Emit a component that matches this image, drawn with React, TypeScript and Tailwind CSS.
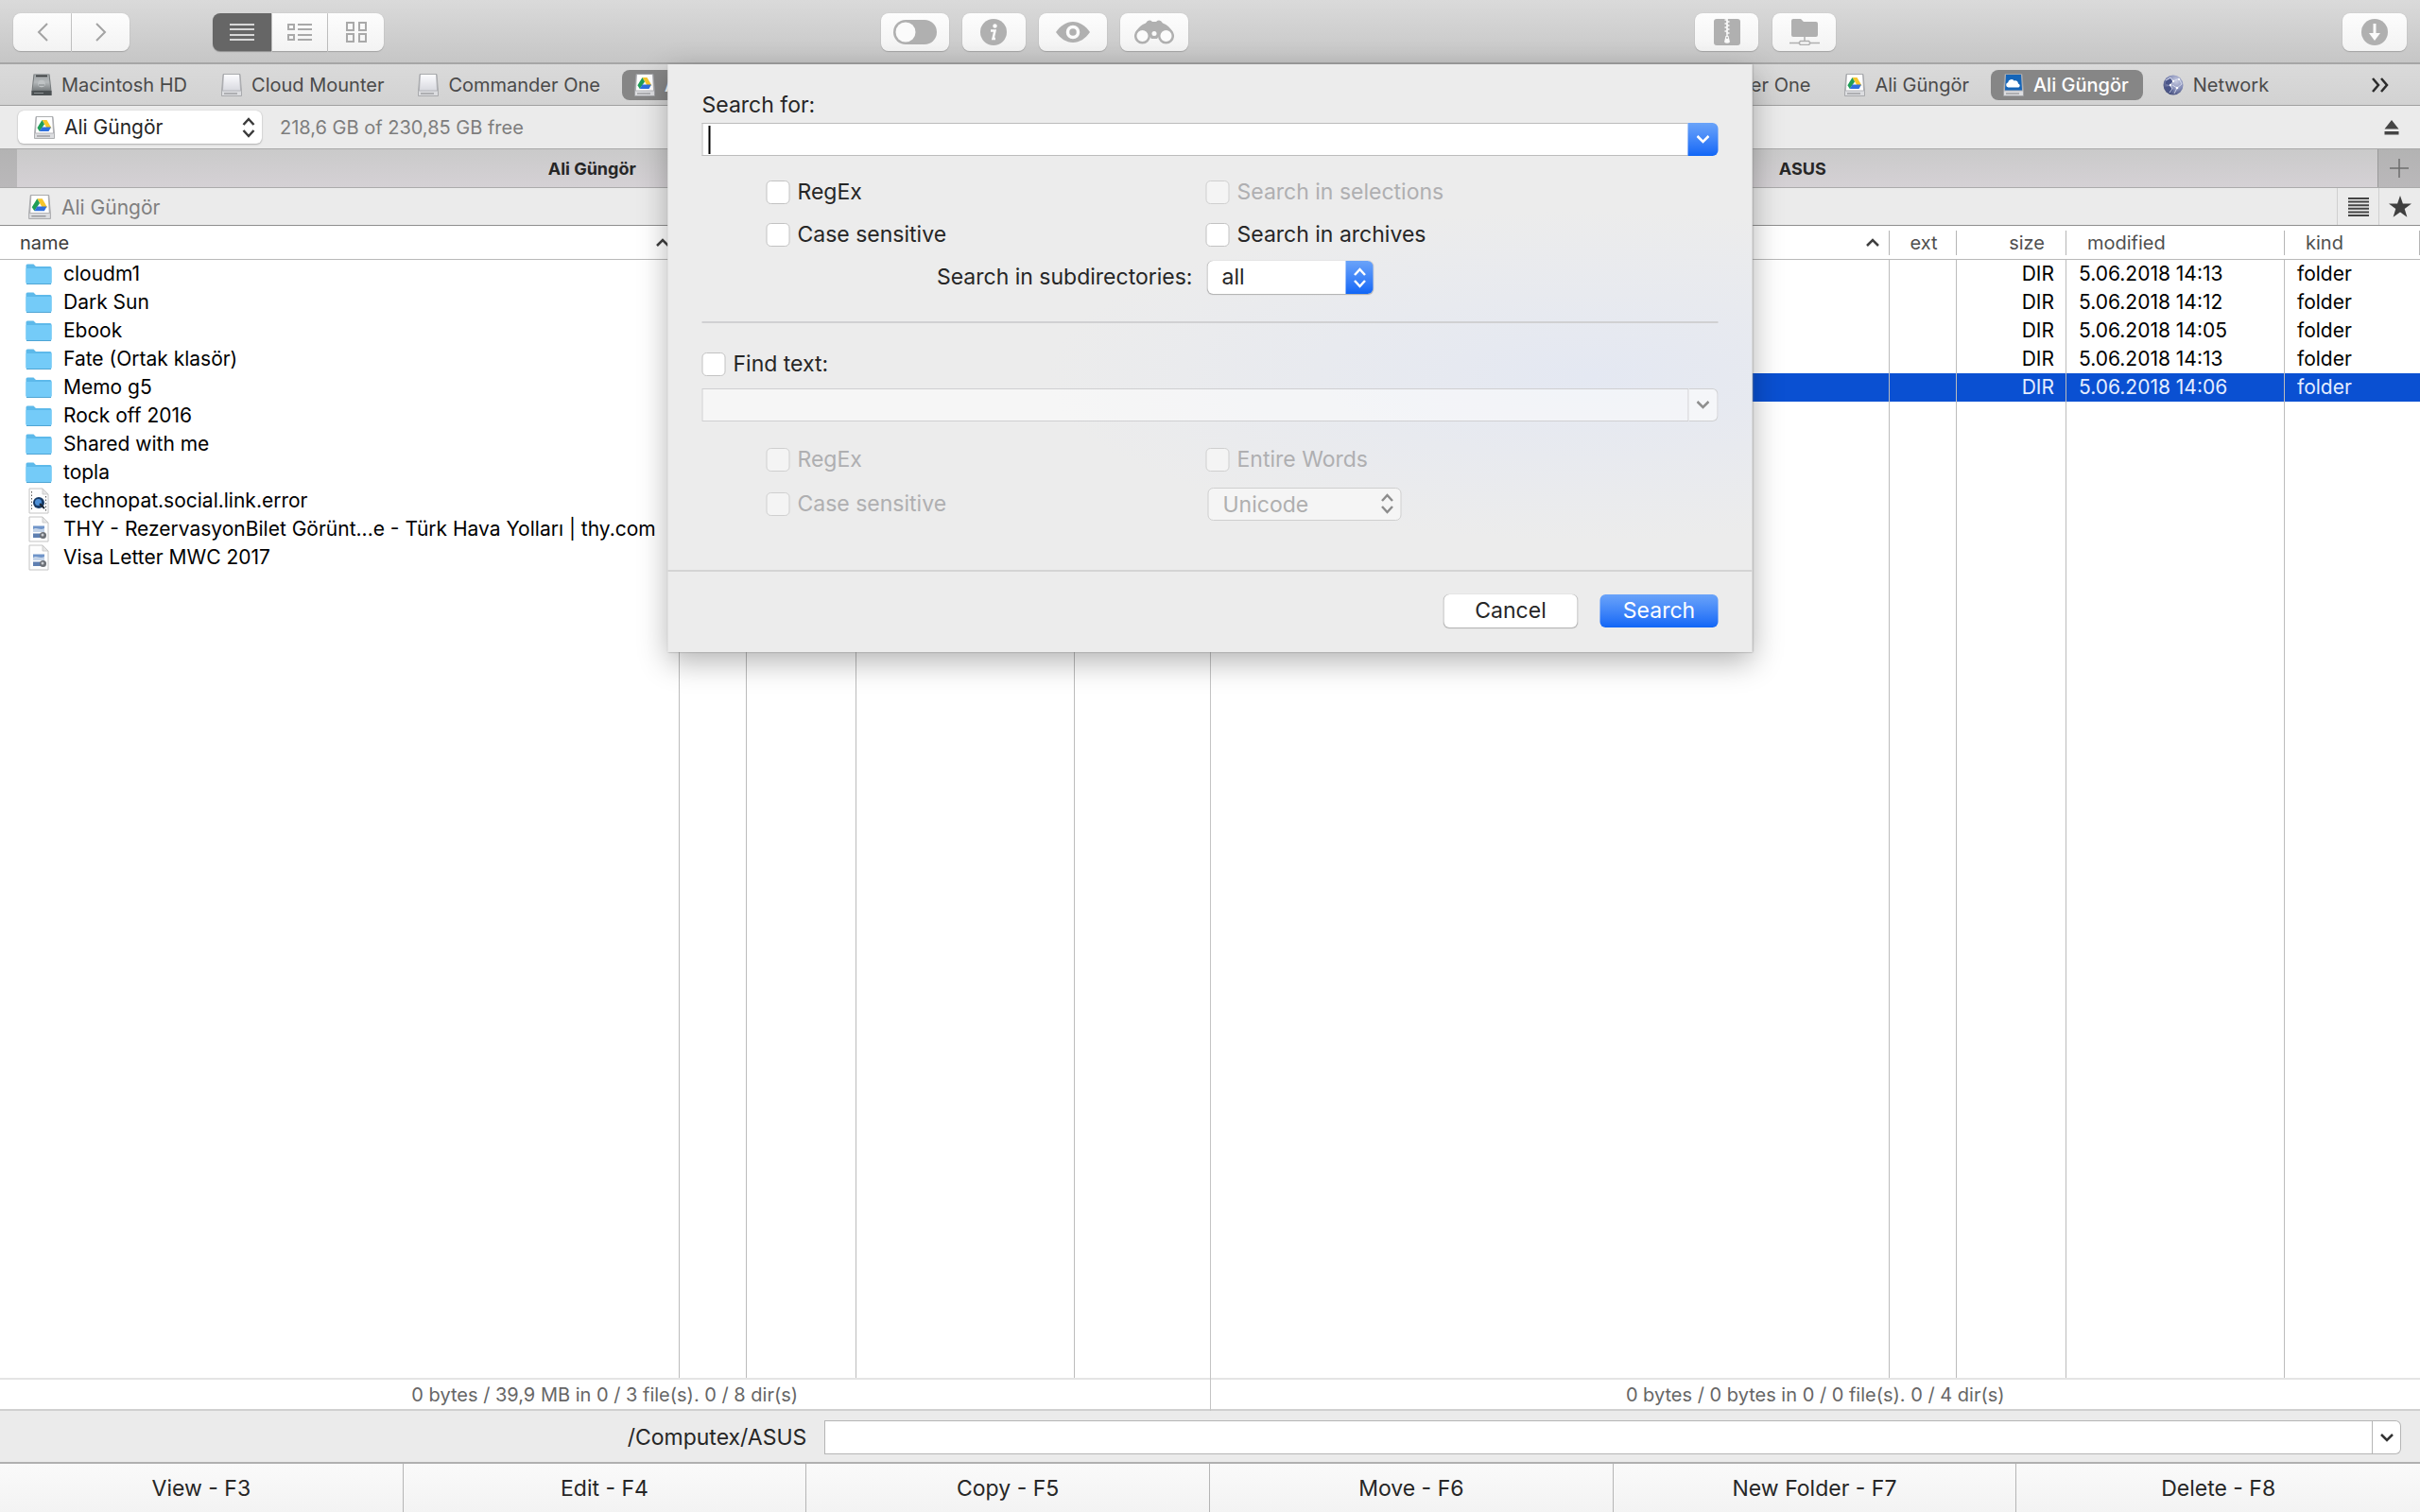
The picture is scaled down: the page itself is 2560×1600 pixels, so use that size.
import type { ReactNode } from 'react';

type DriveKind = 'hd' | 'plain' | 'gdrive' | 'onedrive' | 'network';
type FileKind = 'folder' | 'web' | 'image';

type FileEntry = { name: string; icon: FileKind; size?: string; modified?: string; kind?: string };

type Favorite = { label: string; icon: DriveKind };

const localFavorites: Favorite[] = [
    { label: 'Macintosh HD', icon: 'hd' },
    { label: 'Cloud Mounter', icon: 'plain' },
    { label: 'Commander One', icon: 'plain' },
    { label: 'Ali Güngör', icon: 'gdrive' },
];

const allFavorites: Favorite[] = [
    ...localFavorites,
    { label: 'Ali Güngör', icon: 'onedrive' },
    { label: 'Network', icon: 'network' },
];

const leftFiles: FileEntry[] = [
    { name: 'cloudm1', icon: 'folder' },
    { name: 'Dark Sun', icon: 'folder' },
    { name: 'Ebook', icon: 'folder' },
    { name: 'Fate (Ortak klasör)', icon: 'folder' },
    { name: 'Memo g5', icon: 'folder' },
    { name: 'Rock off 2016', icon: 'folder' },
    { name: 'Shared with me', icon: 'folder' },
    { name: 'topla', icon: 'folder' },
    { name: 'technopat.social.link.error', icon: 'web' },
    { name: 'THY - RezervasyonBilet Görünt...e - Türk Hava Yolları | thy.com', icon: 'image' },
    { name: 'Visa Letter MWC 2017', icon: 'image' },
];

const rightFiles: FileEntry[] = [
    { name: '', icon: 'folder', size: 'DIR', modified: '5.06.2018 14:13', kind: 'folder' },
    { name: '', icon: 'folder', size: 'DIR', modified: '5.06.2018 14:12', kind: 'folder' },
    { name: '', icon: 'folder', size: 'DIR', modified: '5.06.2018 14:05', kind: 'folder' },
    { name: '', icon: 'folder', size: 'DIR', modified: '5.06.2018 14:13', kind: 'folder' },
    { name: '', icon: 'folder', size: 'DIR', modified: '5.06.2018 14:06', kind: 'folder' },
];

const commands = ['View - F3', 'Edit - F4', 'Copy - F5', 'Move - F6', 'New Folder - F7', 'Delete - F8'];

function DriveIcon({ kind, className = 'h-6 w-6' }: { kind: DriveKind; className?: string }) {
    if (kind === 'network') {
        return (
            <svg viewBox="0 0 24 24" className={className} aria-hidden="true">
                <defs>
                    <radialGradient id="globe" cx="0.65" cy="0.3" r="0.8">
                        <stop offset="0" stopColor="#c9cde2" />
                        <stop offset="0.55" stopColor="#8089b4" />
                        <stop offset="1" stopColor="#39426f" />
                    </radialGradient>
                </defs>
                <circle cx="12" cy="12" r="10.5" fill="url(#globe)" />
                <path d="M4 8l5-3 3 4-4 3-4-1zM3 14l5-1 4 4-3 4-4-3z" fill="#4a5588" />
                <path d="M4 7l5-3 3 4-3 4 2 4-3 4M12 8l6-3 3 6-5 4-5-3M16 15l-3 6" fill="none" stroke="#dfe4f4" strokeWidth="0.8" />
                <g fill="#fff">
                    <circle cx="9" cy="12" r="1.2" />
                    <circle cx="12" cy="8" r="1.2" />
                    <circle cx="16" cy="15" r="1.3" />
                    <circle cx="18" cy="6" r="1" />
                </g>
            </svg>
        );
    }
    if (kind === 'hd') {
        return (
            <svg viewBox="0 0 24 24" className={className} aria-hidden="true">
                <defs>
                    <linearGradient id="metal" x1="0" y1="0" x2="0" y2="1">
                        <stop offset="0" stopColor="#9ea3a5" />
                        <stop offset="0.5" stopColor="#b4b8ba" />
                        <stop offset="1" stopColor="#7b8082" />
                    </linearGradient>
                </defs>
                <path d="M3.5.5h17L22.500 18v5h-21v-5z" fill="#74797b" />
                <path d="M4.500.5h15l2 17H2.500z" fill="url(#metal)" />
                <path d="M6 1.500h12v1.800H6z" fill="#3c3f41" />
                <circle cx="12" cy="10.500" r="3.800" fill="#bfc3c5" />
                <path d="M9 12h6" stroke="#7f8486" strokeWidth="1" />
                <path d="M1.500 18h21v5h-21z" fill="#4c5153" />
                <path d="M4 20.500h10" stroke="#8c9193" strokeWidth="1" />
            </svg>
        );
    }
    return (
        <svg viewBox="0 0 24 24" className={className} aria-hidden="true">
            <defs>
                <linearGradient id="plate" x1="0" y1="0" x2="0" y2="1">
                    <stop offset="0" stopColor="#fbfbfe" />
                    <stop offset="1" stopColor="#d9dae0" />
                </linearGradient>
            </defs>
            <path d="M3 .5h18l1.500 18v5h-21v-5z" fill="#b4b5b9" stroke="#a2a3a6" strokeWidth="0.8" />
            <path
                d="M4 1h16l1 16.500H3z"
                fill={kind === 'onedrive' ? '#1565b8' : kind === 'gdrive' ? '#ffffff' : 'url(#plate)'}
            />
            <path d="M2 18.500h20v4.500H2z" fill="#dcdde0" />
            <path d="M4 21h14" stroke="#8f9093" strokeWidth="1.200" />
            {kind === 'gdrive' && (
                <g>
                    <path d="M9.500 4h5l5 8.500h-5z" fill="#f6c62c" />
                    <path d="M9.500 4l2.500 4.400-5.200 7.600-2.400-3.800z" fill="#1f9e57" />
                    <path d="M9.500 11.500h9.500L16.500 16H6.800z" fill="#2f6fde" />
                </g>
            )}
            {kind === 'onedrive' && (
                <path
                    d="M6.500 14.500a2.700 2.700 0 01-.3-5.300 3.600 3.600 0 016.400-1.800 3.700 3.700 0 014.400 3 2.200 2.200 0 01.5 4.100z"
                    fill="#ffffff"
                />
            )}
        </svg>
    );
}

function FileIcon({ kind }: { kind: FileKind }) {
    if (kind === 'folder') {
        return (
            <svg viewBox="0 0 28 24" className="h-6 w-7" aria-hidden="true">
                <path d="M.5 3A1.500 1.500 0 012 1.500h6.500L11 4h15a1.500 1.500 0 011.500 1.500V21H.5z" fill="#5db9ea" />
                <path d="M.5 6h27v15.500a1 1 0 01-1 1h-25a1 1 0 01-1-1z" fill="#74cbf8" />
                <path d="M1 22.500h26" stroke="#4fa5d4" strokeWidth="1" />
            </svg>
        );
    }
    return (
        <svg viewBox="0 0 28 28" className="h-7 w-7" aria-hidden="true">
            <path d="M4 1h14l6 6v20H4z" fill="#fdfdfd" stroke="#c4c4c4" strokeWidth="1" />
            <path d="M18 1v6h6z" fill="#e6e6e6" stroke="#c4c4c4" strokeWidth="0.8" />
            {kind === 'web' ? (
                <g>
                    <path d="M6.500 4v21M21.500 9v16" stroke="#555" strokeWidth="1" strokeDasharray="1.500 2" />
                    <circle cx="14" cy="16" r="6" fill="#173a66" />
                    <circle cx="13.500" cy="15.500" r="3.500" fill="#4d8fd6" />
                    <path d="M15 17l5 5" stroke="#1d2733" strokeWidth="2" />
                </g>
            ) : (
                <g>
                    <path d="M8 10.500h12v6H8z" fill="#6f94c9" />
                    <path d="M8 14c4-3 7 2 12-1v4H8z" fill="#c3d3e8" />
                    <path d="M8 18.500h10V23H8z" fill="#5e7fb1" />
                    <circle cx="18.500" cy="20.500" r="3.500" fill="#6b6f75" />
                    <circle cx="18" cy="20" r="1.500" fill="#c9ccd1" />
                </g>
            )}
        </svg>
    );
}

function ToolButton({ label, className = 'w-[70px] rounded-lg', children }: { label: string; className?: string; children: ReactNode }) {
    return (
        <button
            type="button"
            aria-label={label}
            className={`flex h-10 items-center justify-center bg-linear-to-b from-[#fdfdfd] to-[#f3f3f3] text-[#b0b0b0] shadow-[0_1px_1px_#a3a3a3,0_0_1px_#b0b0b0] ${className}`}
        >
            {children}
        </button>
    );
}

function Toolbar() {
    return (
        <header className="flex h-[68px] items-center border-b-2 border-[#a6a6a6] bg-linear-to-b from-[#dadada] to-[#c6c6c6] px-[14px] pt-[2px]">
            <div className="flex gap-px">
                <ToolButton label="Back" className="w-[61px] rounded-l-lg">
                    <svg viewBox="0 0 14 20" className="h-5 w-[14px]" fill="none" stroke="#a3a3a3" strokeWidth="2">
                        <path d="M12 1L3 10l9 9" />
                    </svg>
                </ToolButton>
                <ToolButton label="Forward" className="w-[61px] rounded-r-lg">
                    <svg viewBox="0 0 14 20" className="h-5 w-[14px]" fill="none" stroke="#a3a3a3" strokeWidth="2">
                        <path d="M2 1l9 9-9 9" />
                    </svg>
                </ToolButton>
            </div>
            <div className="ml-[88px] flex gap-px">
                <button
                    type="button"
                    aria-label="Full list"
                    aria-pressed="true"
                    className="flex h-10 w-[62px] items-center justify-center rounded-l-lg bg-[#666] shadow-[0_1px_1px_#909090]"
                >
                    <svg viewBox="0 0 26 20" className="h-5 w-[26px]" stroke="#d8d8d8" strokeWidth="2">
                        <path d="M0 2h26M0 7h26M0 13h26M0 18h26" />
                    </svg>
                </button>
                <ToolButton label="Brief list" className="w-[58px]">
                    <svg viewBox="0 0 26 20" className="h-5 w-[26px]" fill="none" stroke="#a9a9a9" strokeWidth="2">
                        <path d="M1 2h6v5H1zM1 13h6v5H1zM11 2h15M11 7h15M11 13h15M11 18h15" />
                    </svg>
                </ToolButton>
                <ToolButton label="Thumbnails" className="w-[59px] rounded-r-lg">
                    <svg viewBox="0 0 24 22" className="h-[22px] w-6" fill="none" stroke="#a9a9a9" strokeWidth="2">
                        <path d="M2 1h7v8H2zM15 1h7v8h-7zM2 13h7v8H2zM15 13h7v8h-7z" />
                    </svg>
                </ToolButton>
            </div>
            <div className="flex-[526]" />
            <div className="flex gap-[14px]">
                <ToolButton label="Show hidden files" className="w-[72px] rounded-lg">
                    <svg viewBox="0 0 46 26" className="h-[26px] w-[46px]">
                        <rect width="46" height="26" rx="13" fill="#b0b0b0" />
                        <circle cx="13" cy="13" r="10.5" fill="#fbfbfb" />
                    </svg>
                </ToolButton>
                <ToolButton label="Info" className="w-[67px] rounded-lg">
                    <svg viewBox="0 0 28 28" className="h-7 w-7">
                        <circle cx="14" cy="14" r="14" fill="#b0b0b0" />
                        <circle cx="15.500" cy="7.500" r="2.200" fill="#fbfbfb" />
                        <path d="M11 12.500h4.500l-2 8.500h2.500" fill="none" stroke="#fbfbfb" strokeWidth="2.500" />
                    </svg>
                </ToolButton>
                <ToolButton label="Quick view" className="w-[72px] rounded-lg">
                    <svg viewBox="0 0 36 22" className="h-[22px] w-9">
                        <path d="M0 11C5 4 11 0 18 0s13 4 18 11c-5 7-11 11-18 11S5 18 0 11z" fill="#b0b0b0" />
                        <circle cx="18" cy="11" r="5.500" fill="none" stroke="#fbfbfb" strokeWidth="3.500" />
                    </svg>
                </ToolButton>
                <ToolButton label="Search" className="w-[72px] rounded-lg">
                    <svg viewBox="0 0 42 26" className="h-[26px] w-[42px]">
                        <path d="M1.500 13Q5 6 12 3.500Q15-1.500 19 2h4q4-3.500 7 1.500q7 2.500 10.500 9.500L28 14l-4 6h-6l-4-6z" fill="#b0b0b0" />
                        <circle cx="8.500" cy="17" r="7.300" fill="#fbfbfb" stroke="#b0b0b0" strokeWidth="2.500" />
                        <circle cx="33.500" cy="17" r="7.300" fill="#fbfbfb" stroke="#b0b0b0" strokeWidth="2.500" />
                        <circle cx="21" cy="14.500" r="2.500" fill="#fbfbfb" />
                    </svg>
                </ToolButton>
            </div>
            <div className="flex-[537]" />
            <div className="flex gap-[15px]">
                <ToolButton label="Archive" className="w-[67px] rounded-lg">
                    <svg viewBox="0 0 28 28" className="h-7 w-7">
                        <rect width="28" height="28" rx="3" fill="#b0b0b0" />
                        <path d="M14 0v18" stroke="#fbfbfb" strokeWidth="1.500" />
                        <path d="M11.500 1h3M11.500 5h3M11.500 9h3M11.500 13h3M13.500 3h3M13.500 7h3M13.500 11h3M13.500 15h3" stroke="#fbfbfb" strokeWidth="1.500" />
                        <path d="M12.500 18h3l1.500 6.500q-3 2.500-6 0z" fill="#fbfbfb" />
                        <circle cx="14" cy="20" r="1" fill="#b0b0b0" />
                    </svg>
                </ToolButton>
                <ToolButton label="Connect to server" className="w-[67px] rounded-lg">
                    <svg viewBox="0 0 32 28" className="h-7 w-8">
                        <path d="M2 2q0-2 2-2h8l3 3h13q2 0 2 2v12q0 2-2 2H4q-2 0-2-2z" fill="#b0b0b0" />
                        <path d="M16 19v5M0 25.500h10M22 25.500h10" stroke="#b0b0b0" strokeWidth="1.500" />
                        <path d="M11.500 23.500h9l1.500 2-1.500 2h-9l-1.500-2z" fill="none" stroke="#b0b0b0" strokeWidth="1.500" />
                    </svg>
                </ToolButton>
            </div>
            <div className="flex-[536]" />
            <ToolButton label="Queue" className="w-[68px] rounded-lg">
                <svg viewBox="0 0 28 28" className="h-7 w-7">
                    <circle cx="14" cy="14" r="14" fill="#b0b0b0" />
                    <path d="M14 5v12" stroke="#fbfbfb" strokeWidth="3" />
                    <path d="M8 15h12l-6 8z" fill="#fbfbfb" />
                </svg>
            </ToolButton>
        </header>
    );
}

function FavoritesBar({ items, active }: { items: Favorite[]; active: number }) {
    return (
        <nav className="flex h-11 items-center border-b border-[#a0a0a0] bg-linear-to-b from-[#dadada] to-[#d2d2d2] pr-8 pl-5">
            <div className="flex flex-1 gap-2">
                {items.map((item, index) => (
                    <button
                        key={index}
                        type="button"
                        className={`flex h-8 items-center gap-[9px] rounded-lg pr-[15px] pl-3 text-[20px] whitespace-nowrap ${
                            index === active ? 'bg-[#868686] font-medium text-white' : 'text-[#4a4a4a]'
                        }`}
                    >
                        <DriveIcon kind={item.icon} />
                        {item.label}
                    </button>
                ))}
            </div>
            <button type="button" aria-label="More favorites">
                <svg viewBox="0 0 20 16" className="h-4 w-5" fill="none" stroke="#2b2b2b" strokeWidth="2.500">
                    <path d="M2 1l6 7-6 7M11 1l6 7-6 7" />
                </svg>
            </button>
        </nav>
    );
}

function UpDown({ className, color }: { className: string; color: string }) {
    return (
        <svg viewBox="0 0 14 22" className={className} fill="none" stroke={color} strokeWidth="2.500" aria-hidden="true">
            <path d="M1.500 8L7 2l5.500 6M1.500 14L7 20l5.500-6" />
        </svg>
    );
}

function ColumnHead({ children, className = '' }: { children?: ReactNode; className?: string }) {
    return (
        <th className="h-9 border-b border-[#b9b9b9] p-0 font-normal">
            <div className={`flex h-[26px] items-center border-r border-[#b5b5b5] ${className}`}>{children}</div>
        </th>
    );
}

function FileTable({ files, selected, columns }: { files: FileEntry[]; selected?: number; columns: string[] }) {
    const line = 'border-r border-[#bcbcbc] p-0';
    const [ext, size, modified, kind] = columns;
    return (
        <table className="h-full w-full table-fixed border-separate border-spacing-0 text-[21px] leading-[30px] text-black">
            <colgroup>
                <col />
                <col className="w-[71px]" />
                <col className="w-[116px]" />
                <col className="w-[231px]" />
                <col className="w-[143px]" />
            </colgroup>
            <thead className="text-left text-[20px] text-[#4f4f4f]">
                <tr className="h-9">
                    <ColumnHead className="justify-between pr-[10px] pl-[21px]">
                        <span className="text-[#3c3c3c]">name</span>
                        <svg viewBox="0 0 14 9" className="h-[9px] w-[14px]" fill="none" stroke="#3f3f3f" strokeWidth="2.500" aria-hidden="true">
                            <path d="M1 8l6-6 6 6" />
                        </svg>
                    </ColumnHead>
                    <ColumnHead className="justify-center pl-[2px]">{ext}</ColumnHead>
                    <ColumnHead className="justify-end pr-[22px]">{size}</ColumnHead>
                    <ColumnHead className="pl-[22px]">{modified}</ColumnHead>
                    <ColumnHead className="pl-[22px]">{kind}</ColumnHead>
                </tr>
            </thead>
            <tbody>
                {files.map((file, index) => (
                    <tr key={index} className={index === selected ? 'h-[30px] bg-[#0a50d2] text-[#e4edff]' : 'h-[30px]'}>
                        <td className={line}>
                            <div className="flex h-[30px] items-center gap-3 overflow-hidden pl-[27px] whitespace-nowrap">
                                <FileIcon kind={file.icon} />
                                {file.name}
                            </div>
                        </td>
                        <td className={line} />
                        <td className={`${line} text-right`}>
                            <span className="pr-3">{file.size}</span>
                        </td>
                        <td className={`${line} whitespace-nowrap`}>
                            <span className="pl-[13px]">{file.modified}</span>
                        </td>
                        <td className="p-0">
                            <span className="pl-[13px]">{file.kind}</span>
                        </td>
                    </tr>
                ))}
                {/* stretches the column lines down to the status line */}
                <tr>
                    <td className={line} />
                    <td className={line} />
                    <td className={line} />
                    <td className={line} />
                    <td className="p-0" />
                </tr>
            </tbody>
        </table>
    );
}

type PaneProps = {
    className?: string;
    favorites: Favorite[];
    activeFavorite: number;
    drive: DriveKind;
    free?: string;
    tab: string;
    path?: string;
    files: FileEntry[];
    columns?: string[];
    selected?: number;
    status: string;
};

function Pane({ className = '', favorites, activeFavorite, drive, free, tab, path, files, columns = [], selected, status }: PaneProps) {
    return (
        <section className={`flex min-w-0 flex-1 flex-col ${className}`}>
            <FavoritesBar items={favorites} active={activeFavorite} />
            <div className="flex h-[46px] items-center border-b border-[#a9a9a9] bg-[#ebebeb] pr-[22px] pl-[19px]">
                <div className="relative h-[35px] w-[258px]">
                    <select
                        aria-label="Drive"
                        className="h-full w-full appearance-none rounded-md bg-white pl-[49px] text-[21px] text-[#262626] shadow-[0_1px_2px_#b0b0b0,0_0_1px_#a9a9a9]"
                    >
                        <option>{path}</option>
                    </select>
                    <div className="pointer-events-none absolute inset-0 flex items-center justify-between pr-[7px] pl-4">
                        <DriveIcon kind={drive} />
                        <UpDown className="h-[22px] w-[14px]" color="#3a3a3a" />
                    </div>
                </div>
                <span className="ml-[19px] flex-1 text-[20px] text-[#7d7d7d]">{free}</span>
                <button type="button" aria-label="Eject">
                    <svg viewBox="0 0 16 16" className="h-4 w-4" fill="#444">
                        <path d="M8 0l7.500 9.500H.5zM.5 12h15v3.500H.5z" />
                    </svg>
                </button>
            </div>
            <div className="flex h-[41px] border-b border-[#ababab] bg-linear-to-b from-[#b3b3b3] to-[#bab8ba] pl-[18px]">
                <button
                    type="button"
                    className="flex-1 bg-linear-to-b from-[#cacaca] to-[#d5d1d5] text-[18px] font-bold text-[#262626]"
                >
                    {tab}
                </button>
                <button type="button" aria-label="New tab" className="flex w-[45px] items-center justify-center border-l border-[#999]">
                    <svg viewBox="0 0 20 20" className="h-5 w-5" stroke="#6e6e6e" strokeWidth="1.500">
                        <path d="M10 0v20M0 10h20" />
                    </svg>
                </button>
            </div>
            <div className="flex h-10 items-center border-b border-[#8f8f8f] bg-[#ebebeb] pl-[29px] text-[21px] text-[#7f7f7f]">
                <DriveIcon kind={drive} className="h-[26px] w-[26px]" />
                <span className="ml-[10px] flex-1 pt-[2px]">{path}</span>
                <button type="button" aria-label="History" className="flex h-full w-11 items-center justify-center border-l border-[#cfcfcf]">
                    <svg viewBox="0 0 22 20" className="h-5 w-[22px]" stroke="#444" strokeWidth="2">
                        <path d="M0 1h22M0 4.600h22M0 8.200h22M0 11.800h22M0 15.400h22M0 19h22" />
                    </svg>
                </button>
                <button type="button" aria-label="Favorites" className="flex h-full w-11 items-center justify-center border-l border-[#cfcfcf]">
                    <svg viewBox="0 0 24 23" className="h-[23px] w-6" fill="#3f3f3f">
                        <path d="M12 0l2.900 8.500H24l-7.300 5.400 2.700 8.900L12 17.400l-7.400 5.400 2.700-8.900L0 8.500h9.100z" />
                    </svg>
                </button>
            </div>
            <div className="min-h-0 flex-1 bg-white">
                <FileTable files={files} selected={selected} columns={columns} />
            </div>
            <p className="flex h-[35px] items-center justify-center border-t-2 border-b-2 border-t-[#e4e4e4] border-b-[#d0d0d0] bg-white text-[20px] text-[#666]">
                {status}
            </p>
        </section>
    );
}

function CheckOption({ label, disabled = false }: { label: string; disabled?: boolean }) {
    return (
        <label className={`flex items-center gap-2 ${disabled ? 'text-[#afafb1]' : 'text-[#262626]'}`}>
            <input
                type="checkbox"
                disabled={disabled}
                className="size-[25px] appearance-none rounded-[5px] border border-[#c2c2c2] bg-white disabled:border-[#cfcfcf] disabled:bg-[#f4f4f4]"
            />
            {label}
        </label>
    );
}

function SearchDialog() {
    return (
        <form
            aria-label="Search"
            className="absolute top-[68px] left-1/2 w-[1147px] -translate-x-1/2 bg-[#ececec] bg-radial-[50%_28%_at_85%_53%] from-[#e4e8f2] to-[#ececec] text-[23px] text-[#262626] shadow-[0_0_2px_#8c8c8c,0_10px_30px_rgba(0,0,0,0.3)]"
        >
            <div className="px-9 pt-[30px] pb-[46px]">
                <label htmlFor="search-for" className="block leading-[26px]">
                    Search for:
                </label>
                <div className="relative mt-[6px] flex h-[35px]">
                    <input id="search-for" type="text" className="min-w-0 flex-1 border border-r-0 border-[#bcbcbc] bg-white px-2 outline-none" />
                    <span className="absolute top-[3px] left-[7px] h-[30px] w-[2px] bg-black" />
                    <button
                        type="button"
                        aria-label="Recent searches"
                        className="flex w-8 items-center justify-center rounded-r-md bg-linear-to-b from-[#6aa3f9] to-[#0f66f6]"
                    >
                        <svg viewBox="0 0 14 9" className="h-[9px] w-[14px]" fill="none" stroke="#fff" strokeWidth="2.500">
                            <path d="M1 1l6 6 6-6" />
                        </svg>
                    </button>
                </div>
                <div className="mt-4 grid auto-rows-[45px] grid-cols-[465px_1fr] items-center pl-[68px]">
                    <CheckOption label="RegEx" />
                    <CheckOption label="Search in selections" disabled />
                    <CheckOption label="Case sensitive" />
                    <CheckOption label="Search in archives" />
                    <label htmlFor="subdirs" className="pr-[14px] text-right">
                        Search in subdirectories:
                    </label>
                    <div className="relative ml-[2px] h-[35px] w-[175px]">
                        <select
                            id="subdirs"
                            className="h-full w-full appearance-none rounded-md bg-white pl-[15px] shadow-[0_1px_1px_#b0b0b0,0_0_1px_#a9a9a9]"
                        >
                            <option>all</option>
                        </select>
                        <div className="pointer-events-none absolute inset-y-0 right-0 flex w-[29px] items-center justify-center rounded-r-md bg-linear-to-b from-[#6aa3f9] to-[#0f66f6]">
                            <UpDown className="h-[22px] w-[14px]" color="#fff" />
                        </div>
                    </div>
                </div>
                <hr className="mt-6 border-t-2 border-[#d0d0d2]" />
                <div className="mt-[21px] flex h-[45px] items-center">
                    <CheckOption label="Find text:" />
                </div>
                <div className="mt-[3px] flex h-[35px]">
                    <input
                        type="text"
                        aria-label="Text to find"
                        disabled
                        className="min-w-0 flex-1 border border-[#cfcfd1] bg-white/50 px-2"
                    />
                    <button
                        type="button"
                        aria-label="Recent texts"
                        disabled
                        className="flex w-[31px] items-center justify-center rounded-r-md border border-l-0 border-[#cfcfd1] bg-white/60"
                    >
                        <svg viewBox="0 0 14 9" className="h-[9px] w-[14px]" fill="none" stroke="#8f8f8f" strokeWidth="2.500">
                            <path d="M1 1l6 6 6-6" />
                        </svg>
                    </button>
                </div>
                <div className="mt-[17px] grid auto-rows-[47px] grid-cols-[465px_1fr] items-center pl-[68px]">
                    <CheckOption label="RegEx" disabled />
                    <CheckOption label="Entire Words" disabled />
                    <CheckOption label="Case sensitive" disabled />
                    <div className="relative ml-[2px] h-[35px] w-[205px]">
                        <select
                            aria-label="Encoding"
                            disabled
                            className="h-full w-full appearance-none rounded-md border border-[#cfcfcf] bg-[#f5f5f5] pl-[15px] text-[#afafaf] opacity-100"
                        >
                            <option>Unicode</option>
                        </select>
                        <UpDown className="pointer-events-none absolute top-[6px] right-2 h-[22px] w-[14px]" color="#8c8c8c" />
                    </div>
                </div>
            </div>
            <div className="flex h-[87px] items-center justify-end gap-6 border-t-2 border-[#d4d4d4] px-9 pb-[2px]">
                <button type="button" className="h-[35px] w-[141px] rounded-md bg-white shadow-[0_1px_1px_#b0b0b0,0_0_1px_#a0a0a0]">
                    Cancel
                </button>
                <button type="submit" className="h-[35px] w-[125px] rounded-md bg-linear-to-b from-[#6aa3f9] to-[#0f66f6] text-white">
                    Search
                </button>
            </div>
        </form>
    );
}

export default function App() {
    return (
        <div className="relative flex h-screen flex-col overflow-hidden bg-[#ebebeb] font-['Inter','Liberation_Sans',sans-serif]">
            <Toolbar />
            <main className="flex min-h-0 flex-1">
                <Pane
                    favorites={localFavorites}
                    activeFavorite={3}
                    drive="gdrive"
                    free="218,6 GB of 230,85 GB free"
                    tab="Ali Güngör"
                    path="Ali Güngör"
                    files={leftFiles}
                    status="0 bytes / 39,9 MB in 0 / 3 file(s). 0 / 8 dir(s)"
                />
                <Pane
                    className="border-l border-[#c4c4c4]"
                    favorites={allFavorites}
                    activeFavorite={4}
                    drive="onedrive"
                    tab="ASUS"
                    files={rightFiles}
                    columns={['ext', 'size', 'modified', 'kind']}
                    selected={4}
                    status="0 bytes / 0 bytes in 0 / 0 file(s). 0 / 4 dir(s)"
                />
            </main>
            <div className="flex h-[54px] items-center pt-[2px] text-[23px] text-[#262626]">
                <label htmlFor="command" className="w-1/3 text-right">
                    /Computex/ASUS
                </label>
                <input id="command" type="text" className="ml-[19px] h-9 min-w-0 flex-1 border border-[#b5b5b5] bg-white px-2" />
                <button
                    type="button"
                    aria-label="Command history"
                    className="mr-5 flex h-9 w-[30px] items-center justify-center rounded-r-md border border-l-0 border-[#b5b5b5] bg-white"
                >
                    <svg viewBox="0 0 14 9" className="h-[9px] w-[14px]" fill="none" stroke="#333" strokeWidth="2.500">
                        <path d="M1 1l6 6 6-6" />
                    </svg>
                </button>
            </div>
            <footer className="grid h-[53px] grid-cols-6 divide-x divide-[#b5b5b5] border-t-2 border-[#b0b0b0] bg-linear-to-b from-[#fafafa] to-[#f3f3f3]">
                {commands.map((command) => (
                    <button key={command} type="button" className="pt-[2px] text-[23px] text-[#262626]">
                        {command}
                    </button>
                ))}
            </footer>
            <SearchDialog />
        </div>
    );
}
